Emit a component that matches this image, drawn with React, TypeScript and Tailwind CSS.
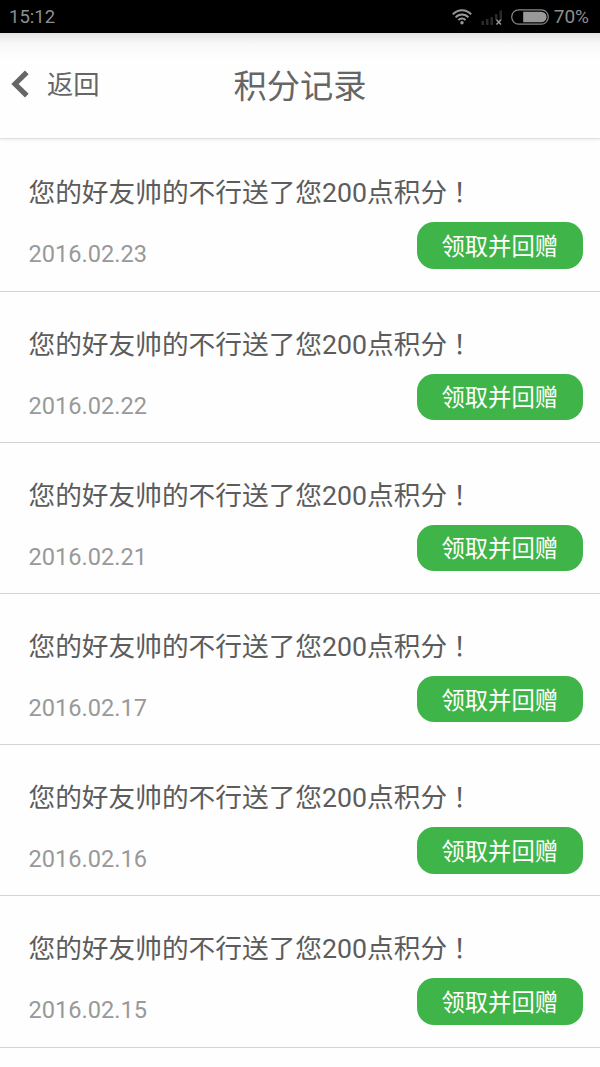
const records = [
  { date: '2016.02.23', points: 200 },
  { date: '2016.02.22', points: 200 },
  { date: '2016.02.21', points: 200 },
  { date: '2016.02.17', points: 200 },
  { date: '2016.02.16', points: 200 },
  { date: '2016.02.15', points: 200 },
];

function StatusBar() {
  return (
    <div className="flex h-[33px] items-center justify-between bg-black pl-[9px] pr-[11px] text-[19px] leading-[33px] text-[#8e8e8e]">
      <span className="pt-px text-[18.5px]">15:12</span>
      <div className="flex items-center">
        <svg className="mr-[9px]" width="20" height="16" viewBox="0 0 20 16" fill="none" stroke="#999" strokeWidth="1.9">
          <path d="M0.8 5.4C5.8 -0.2 14.2 -0.2 19.2 5.4" />
          <path d="M3.6 8.4C7 4.5 13 4.5 16.4 8.4" />
          <path d="M6.4 11.2C8.3 8.9 11.7 8.9 13.6 11.2" />
          <circle cx="10" cy="13.8" r="1.7" fill="#999" stroke="none" />
        </svg>
        <svg className="mr-[8px]" width="22" height="16" viewBox="0 0 22 16">
          <g fill="#2b2b2b">
            <rect x="0.5" y="12" width="2.5" height="4" />
            <rect x="5" y="10" width="2.5" height="6" />
            <rect x="9.5" y="8" width="2.5" height="8" />
            <rect x="14" y="5" width="2.5" height="6" />
            <rect x="18.5" y="1.5" width="2.5" height="9.5" />
          </g>
          <path d="M15.5 10.7L20 15.5M20 10.7L15.5 15.5" stroke="#999" strokeWidth="1.5" />
        </svg>
        <svg className="mr-[5px]" width="38" height="16" viewBox="0 0 38 16">
          <rect x="0.7" y="0.9" width="36.6" height="14.2" rx="7" fill="none" stroke="#888" strokeWidth="1.2" />
          <path d="M12.2 2.7H30.3a5.3 5.3 0 0 1 0 10.6H12.2Z" fill="#999" />
        </svg>
        <span>70%</span>
      </div>
    </div>
  );
}

function Header() {
  return (
    <header className="relative flex h-[106px] items-center border-b border-[#e0e0e0] bg-gradient-to-b from-[#e3e3e3] via-[#f8f8f8] via-10% to-[#fefefe] to-25% text-[#666] shadow-[0_1px_3px_rgba(0,0,0,0.08)]">
      <button className="flex items-center pl-[11px] text-[26.3px]">
        <svg className="mr-[18px] mb-[4px]" width="18" height="28" viewBox="0 0 18 28" fill="none" stroke="#666" strokeWidth="5.2">
          <path d="M15.8 2.3L4 14L15.8 25.7" />
        </svg>
        <span className="pt-px">返回</span>
      </button>
      <h1 className="absolute inset-x-0 pt-[2px] text-center text-[33.3px]">积分记录</h1>
    </header>
  );
}

function RecordRow({ date, points }: { date: string; points: number }) {
  return (
    <li className="flex h-[151.2px] flex-col border-b border-[#d3d3d3] pl-[28.5px] pr-[17px] pt-[31px]">
      <p className="whitespace-nowrap text-[26.7px] leading-[40px] text-[#5c5c5c]">
        您的好友帅的不行送了您{points}点积分
        <span className="-ml-px font-['Noto_Sans_CJK_TC',sans-serif]">！</span>
      </p>
      <div className="mt-[9px] flex justify-between">
        <span className="pt-[15px] text-[23.6px] leading-[34px] text-[#999]">{date}</span>
        <button className="flex h-[46.5px] w-[166.5px] items-center justify-center rounded-[17px] bg-[#3fb549] pt-[4px] text-[23.3px] leading-none text-white">
          领取并回赠
        </button>
      </div>
    </li>
  );
}

export default function App() {
  return (
    <div className="h-[1067px] w-[600px] overflow-hidden bg-[#fefefe] font-[Roboto,'Noto_Sans_CJK_SC',sans-serif]">
      <StatusBar />
      <Header />
      <ul className="pt-[1.4px]">
        {records.map((record) => (
          <RecordRow key={record.date} {...record} />
        ))}
      </ul>
    </div>
  );
}
